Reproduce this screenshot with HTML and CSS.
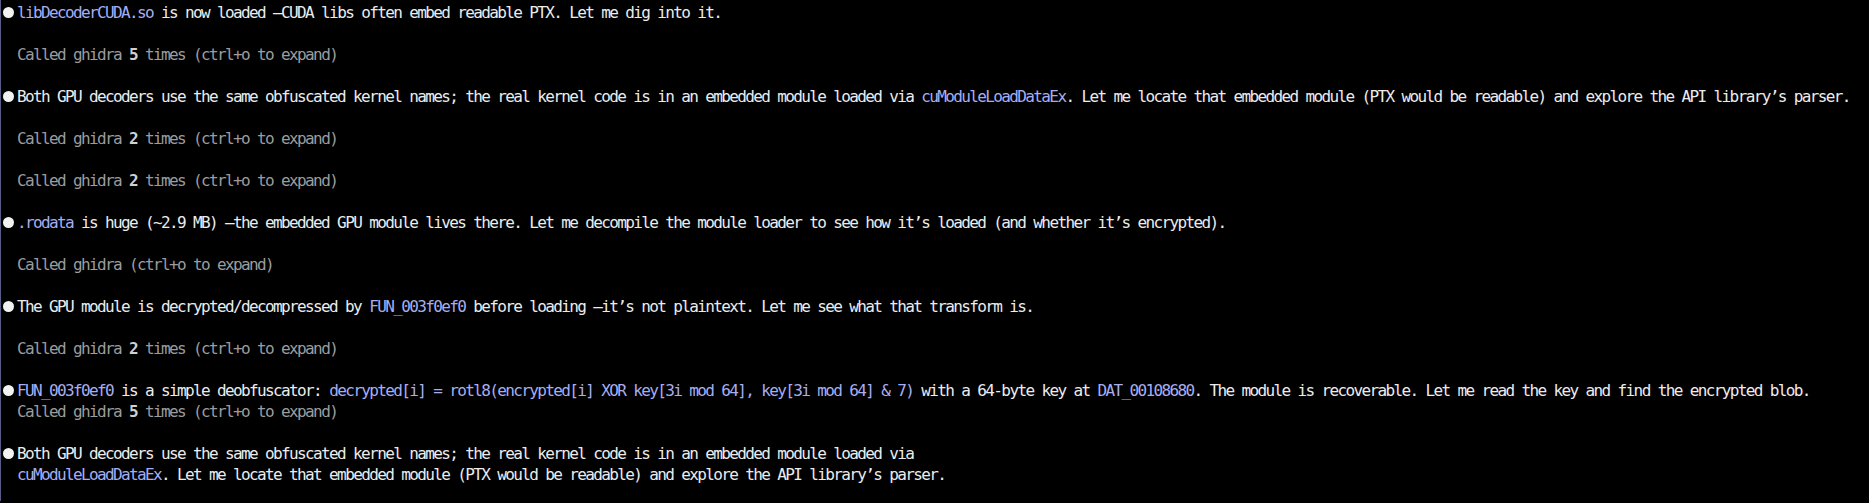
FILE: index.html
```html
<!DOCTYPE html>
<html lang="en">
<head>
<meta charset="utf-8">
<title>Transcript</title>
<link rel="stylesheet" href="styles.css">
</head>
<body>
<main class="log">
  <div class="msg"><span class="dot"></span><p class="text"><span class="ref">libDecoderCUDA.so</span> is now loaded —CUDA libs often embed readable PTX. Let me dig into it.</p></div>
  <div class="tool">Called ghidra <b>5</b> times (ctrl+o to expand)</div>

  <div class="msg"><span class="dot"></span><p class="text">Both GPU decoders use the same obfuscated kernel names; the real kernel code is in an embedded module loaded via <span class="ref">cuModuleLoadDataEx</span>. Let me locate that embedded module (PTX would be readable) and explore the API library’s parser.</p></div>
  <div class="tool">Called ghidra <b>2</b> times (ctrl+o to expand)</div>
  <div class="tool">Called ghidra <b>2</b> times (ctrl+o to expand)</div>

  <div class="msg"><span class="dot"></span><p class="text"><span class="ref">.rodata</span> is huge (~2.9 MB) —the embedded GPU module lives there. Let me decompile the module loader to see how it’s loaded (and whether it’s encrypted).</p></div>
  <div class="tool">Called ghidra (ctrl+o to expand)</div>

  <div class="msg"><span class="dot"></span><p class="text">The GPU module is decrypted/decompressed by <span class="ref">FUN_003f0ef0</span> before loading —it’s not plaintext. Let me see what that transform is.</p></div>
  <div class="tool">Called ghidra <b>2</b> times (ctrl+o to expand)</div>

  <div class="msg tight"><span class="dot"></span><p class="text"><span class="ref">FUN_003f0ef0</span> is a simple deobfuscator: <span class="ref">decrypted[i] = rotl8(encrypted[i] XOR key[3i mod 64], key[3i mod 64] &amp; 7)</span> with a 64-byte key at <span class="ref">DAT_00108680</span>. The module is recoverable. Let me read the key and find the encrypted blob.</p></div>
  <div class="tool">Called ghidra <b>5</b> times (ctrl+o to expand)</div>

  <div class="msg"><span class="dot"></span><p class="text">Both GPU decoders use the same obfuscated kernel names; the real kernel code is in an embedded module loaded via<br><span class="ref">cuModuleLoadDataEx</span>. Let me locate that embedded module (PTX would be readable) and explore the API library’s parser.</p></div>
</main>
</body>
</html>
```

FILE: styles.css
```css
html, body {
  margin: 0;
  padding: 0;
  background: #000000;
}

body {
  height: 503px;
  overflow: hidden;
}

.log {
  display: flex;
  flex-direction: column;
  gap: 21px;
  padding: 2px 0 0 0;
  border-left: 1px solid #5b5b86;
  min-height: 501px;
  box-sizing: border-box;
  font-family: "DejaVu Sans Mono", "Liberation Mono", monospace;
  font-size: 16px;
  letter-spacing: -1.63px;
  line-height: 21px;
  color: #ececec;
}

.msg {
  display: flex;
  align-items: flex-start;
}

.msg.tight {
  margin-bottom: -21px;
}

.dot {
  flex: 0 0 16px;
  height: 21px;
  display: flex;
  align-items: center;
  justify-content: flex-start;
}

.dot::before {
  content: "";
  display: block;
  width: 11px;
  height: 11px;
  margin-left: 2px;
  border-radius: 50%;
  background: #f2f2f2;
}

.text {
  margin: 0;
  white-space: nowrap;
}

.ref {
  color: #a6aef0;
}

.tool {
  padding-left: 16px;
  color: #9c9c9c;
  white-space: nowrap;
}

.tool b {
  color: #d0d0d0;
  font-weight: bold;
}
```
